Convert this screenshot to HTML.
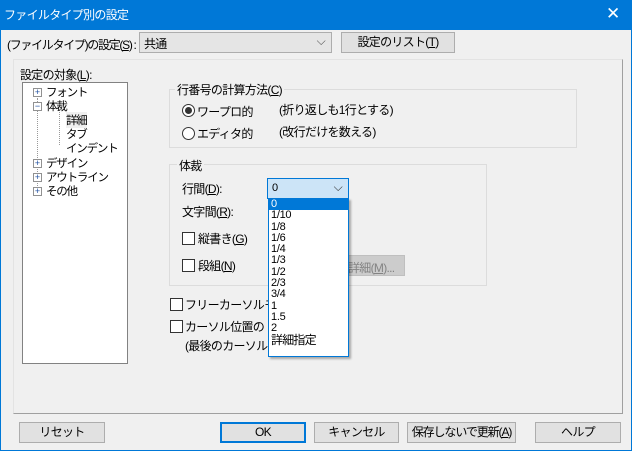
<!DOCTYPE html>
<html><head><meta charset="utf-8"><style>
*{box-sizing:border-box;margin:0;padding:0}
body{width:632px;height:451px;background:#f0f0f0;font:12px "Liberation Sans","Noto Sans CJK JP",sans-serif;letter-spacing:-0.7px;color:#000;position:relative;overflow:hidden;border:1px solid #0078d7}
.a{position:absolute;white-space:nowrap}
.btn{position:absolute;background:#e1e1e1;border:1px solid #adadad;text-align:center;line-height:19px;white-space:nowrap;overflow:hidden}
.grp{position:absolute;border:1px solid #dcdcdc}
.cb{position:absolute;width:13px;height:13px;border:1px solid #333;background:#fff}
.rad{position:absolute;width:13px;height:13px;border:1px solid #333;border-radius:50%;background:#fff}
.pm{position:absolute;width:9px;height:9px;border:1px solid #919191;background:#fff;font-size:9px;line-height:7px;text-align:center;color:#2050a0;letter-spacing:0}
.t{font-size:11.5px;letter-spacing:-1.2px}
.dd div{height:11.3px;line-height:11px;padding-left:2px;font-size:11px;letter-spacing:-0.3px}
</style></head><body>
<div class="a" style="left:-1px;top:-1px;width:632px;height:30px;background:#0078d7;color:#fff;padding:6px 0 0 4px;font-size:12px">ファイルタイプ別の設定</div>
<div class="a" style="left:605px;top:3px;color:#fff;font-size:17px">✕</div>
<div class="a" style="left:6px;top:35px;letter-spacing:-1.3px">(ファイルタイプ)の設定(<u>S</u>) :</div>
<div class="a" style="left:138px;top:31px;width:193px;height:21px;border:1px solid #adadad;background:#e5e5e5;padding:2px 0 0 4px">共通<span style="position:absolute;right:6px;top:1px;color:#555">⌵</span></div>
<div class="btn" style="left:340px;top:31px;width:114px;height:21px">設定のリスト(<u>T</u>)</div>
<div class="a" style="left:12px;top:58px;width:610px;height:355px;border:1px solid #e3e3e3;border-right-color:#a0a0a0;border-bottom-color:#a0a0a0"></div>
<div class="a" style="left:19px;top:65px">設定の対象(<u>L</u>):</div>
<div class="a" style="left:21px;top:81px;width:106px;height:282px;background:#fff;border:1px solid #828282"></div>
<div class="a" style="left:36px;top:97px;height:96px;border-left:1px dotted #999"></div>
<div class="a" style="left:58px;top:109px;height:35px;border-left:1px dotted #999"></div>
<div class="pm" style="left:32px;top:87px">+</div><div class="a t" style="left:45px;top:83px">フォント</div>
<div class="pm" style="left:32px;top:101px">−</div><div class="a t" style="left:45px;top:97px">体裁</div>
<div class="a t" style="left:65px;top:111px;background:#f0f0f0">詳細</div>
<div class="a t" style="left:65px;top:125px">タブ</div>
<div class="a t" style="left:65px;top:139px">インデント</div>
<div class="pm" style="left:32px;top:158px">+</div><div class="a t" style="left:45px;top:154px">デザイン</div>
<div class="pm" style="left:32px;top:172px">+</div><div class="a t" style="left:45px;top:168px">アウトライン</div>
<div class="pm" style="left:32px;top:186px">+</div><div class="a t" style="left:45px;top:182px">その他</div>
<div class="grp" style="left:168px;top:88px;width:408px;height:59px"></div>
<div class="a" style="left:174px;top:80px;background:#f0f0f0;padding:0 2px">行番号の計算方法(<u>C</u>)</div>
<div class="rad" style="left:181px;top:103px"><div style="margin:2px;width:7px;height:7px;border-radius:50%;background:#333"></div></div>
<div class="a" style="left:196px;top:102px">ワープロ的</div>
<div class="a" style="left:278px;top:100px">(折り返しも1行とする)</div>
<div class="rad" style="left:181px;top:126px"></div>
<div class="a" style="left:196px;top:124px">エディタ的</div>
<div class="a" style="left:278px;top:122px">(改行だけを数える)</div>
<div class="grp" style="left:168px;top:163px;width:318px;height:122px"></div>
<div class="a" style="left:176px;top:156px;background:#f0f0f0;padding:0 2px">体裁</div>
<div class="a" style="left:181px;top:179px">行間(<u>D</u>):</div>
<div class="a" style="left:266px;top:177px;width:82px;height:21px;border:1px solid #0078d7;background:#cce4f7;padding:3px 0 0 4px;font-size:11px">0<span style="position:absolute;right:6px;top:1px;color:#333;font-size:12px">⌵</span></div>
<div class="a" style="left:181px;top:202px">文字間(<u>R</u>):</div>
<div class="cb" style="left:181px;top:231px"></div><div class="a" style="left:197px;top:229px">縦書き(<u>G</u>)</div>
<div class="cb" style="left:181px;top:258px"></div><div class="a" style="left:197px;top:256px">段組(<u>N</u>)</div>
<div class="a" style="left:340px;top:254px;width:64px;height:21px;border:1px solid #bfbfbf;background:#ccc;color:#838383;padding:3px 0 0 6px">詳細(<u>M</u>)...</div>
<div class="cb" style="left:169px;top:297px"></div><div class="a" style="left:184px;top:295px">フリーカーソルモード</div>
<div class="cb" style="left:169px;top:319px"></div><div class="a" style="left:184px;top:317px">カーソル位置の</div>
<div class="a" style="left:184px;top:336px">(最後のカーソル</div>
<div class="a dd" style="left:267px;top:197px;width:81px;height:159px;background:#fff;border:1px solid #0078d7;box-shadow:2px 2px 2px rgba(0,0,0,.3)">
<div style="background:#0078d7;color:#fff">0</div><div>1/10</div><div>1/8</div><div>1/6</div><div>1/4</div><div>1/3</div><div>1/2</div><div>2/3</div><div>3/4</div><div>1</div><div>1.5</div><div>2</div><div style="font-size:12px;letter-spacing:-0.8px">詳細指定</div></div>
<div class="btn" style="left:18px;top:421px;width:86px;height:21px">リセット</div>
<div class="btn" style="left:219px;top:421px;width:86px;height:21px;border:2px solid #0078d7;line-height:17px">OK</div>
<div class="btn" style="left:313px;top:421px;width:85px;height:21px">キャンセル</div>
<div class="btn" style="left:406px;top:421px;width:109px;height:21px;letter-spacing:-1.1px">保存しないで更新(<u>A</u>)</div>
<div class="btn" style="left:534px;top:421px;width:86px;height:21px">ヘルプ</div>
</body></html>
